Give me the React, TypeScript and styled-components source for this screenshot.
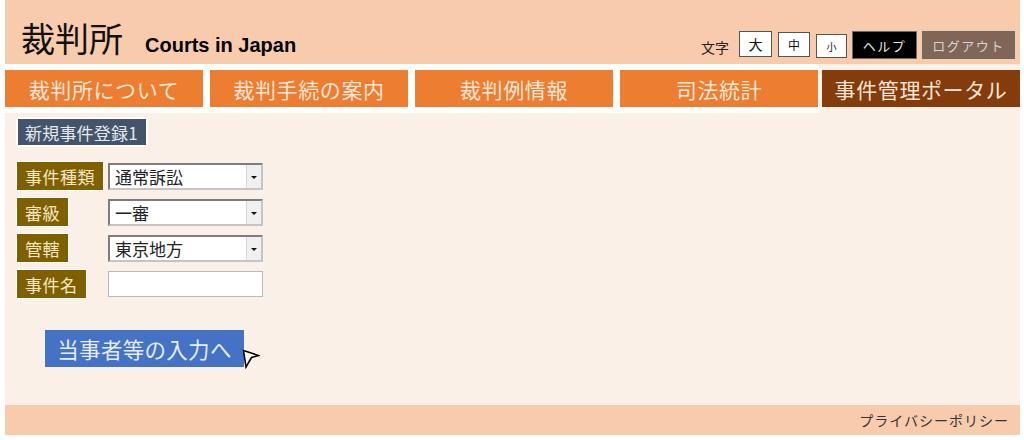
import React from "react";
import styled, { createGlobalStyle } from "styled-components";

const Global = createGlobalStyle`
  html, body { margin: 0; padding: 0; background: #ffffff; }
  body { font-family: "Noto Sans CJK JP", "Noto Sans", sans-serif; }
  * { box-sizing: border-box; }
`;

const JP = `"Noto Sans CJK JP", "Noto Sans", sans-serif`;

const Page = styled.div`
  width: 1015px;
  margin-left: 5px;
  display: flex;
  flex-direction: column;
`;

const Header = styled.header`
  height: 64px;
  background: #f8cbad;
  display: flex;
  justify-content: space-between;
  align-items: flex-end;
  padding: 0 5px 3px 16px;
`;

const TitleGroup = styled.div`
  display: flex;
  align-items: baseline;
  gap: 22px;
  margin-bottom: 3px;
`;

const SiteName = styled.span`
  font-family: ${JP};
  font-size: 34px;
  line-height: 40px;
  color: #111;
  font-weight: 400;
`;

const SiteEn = styled.span`
  font-family: "Liberation Sans", Arial, sans-serif;
  font-weight: 700;
  font-size: 20px;
  color: #000;
`;

const Tools = styled.div`
  display: flex;
  align-items: center;
  margin-bottom: 2px;
`;

const ToolLabel = styled.span`
  font-family: ${JP};
  font-size: 14px;
  color: #222;
  margin-right: 10px;
  margin-top: 4px;
`;

const SizeBtn = styled.span<{ $fs: number; $w: number; $h: number; $dy: number; $gap: number }>`
  display: flex;
  align-items: center;
  justify-content: center;
  width: ${(p) => p.$w}px;
  height: ${(p) => p.$h}px;
  margin-right: ${(p) => p.$gap}px;
  margin-top: ${(p) => p.$dy}px;
  background: #fff;
  border: 1.5px solid #555;
  font-family: ${JP};
  font-size: ${(p) => p.$fs}px;
  color: #111;
`;

const DarkBtn = styled.span<{ $bg: string; $fg: string; $w: number }>`
  display: flex;
  align-items: center;
  justify-content: center;
  width: ${(p) => p.$w}px;
  height: 28px;
  margin-left: 5px;
  background: ${(p) => p.$bg};
  border: 1px solid #6b6b6b;
  color: ${(p) => p.$fg};
  font-family: ${JP};
  font-size: 13px;
  letter-spacing: 1.5px;
`;

const Main = styled.main`
  height: 341px;
  background: #fbf0e7;
  display: flex;
  flex-direction: column;
`;

const NavRow = styled.div`
  display: flex;
  align-items: flex-start;
`;

const NavBox = styled.nav`
  width: 814px;
  background: #ffffff;
  padding: 6px 1px 6px 0;
  display: flex;
  gap: 7px;
`;

const Tab = styled.div<{ $active?: boolean }>`
  width: 198px;
  height: 37px;
  display: flex;
  align-items: center;
  justify-content: center;
  background: ${(p) => (p.$active ? "#843c0c" : "#ed7d31")};
  color: #fbe5d6;
  font-family: ${JP};
  font-size: 21px;
  white-space: nowrap;
  letter-spacing: 0.6px;
`;

const ActiveTab = styled(Tab)`
  margin-top: 6px;
  margin-left: 3px;
`;

const Content = styled.section`
  padding: 4px 0 0 11px;
  display: flex;
  flex-direction: column;
`;

const PageTag = styled.div`
  align-self: flex-start;
  height: 30px;
  padding: 0 8px 0 7px;
  display: flex;
  align-items: center;
  background: #44546a;
  border: 2px solid #ffffff;
  color: #e4e8ef;
  font-family: ${JP};
  font-size: 17px;
  letter-spacing: 0.2px;
`;

const Form = styled.div`
  margin-top: 14px;
  display: grid;
  grid-template-columns: 92px 155px;
  row-gap: 6px;
  align-items: center;
`;

const FieldLabel = styled.div`
  justify-self: start;
  height: 30px;
  padding: 0 8px;
  display: flex;
  align-items: center;
  background: #7f6000;
  border: 1px solid #ffffff;
  color: #f4e6c4;
  font-family: ${JP};
  font-size: 17px;
  letter-spacing: 0.5px;
`;

const SelectBox = styled.div`
  height: 27px;
  display: flex;
  align-items: stretch;
  background: #ffffff;
  border: 2px solid;
  border-color: #7d7d7d #c4c4c4 #c4c4c4 #7d7d7d;
`;

const SelectText = styled.span`
  flex: 1;
  display: flex;
  align-items: center;
  padding-left: 5px;
  font-family: ${JP};
  font-size: 17px;
  color: #222;
`;

const SelectArrow = styled.span`
  width: 15px;
  background: #f0f0f0;
  border-left: 1px solid #d8d8d8;
  display: flex;
  align-items: center;
  justify-content: center;
  &::after {
    content: "";
    display: block;
    margin-top: 3px;
    border-left: 3px solid transparent;
    border-right: 3px solid transparent;
    border-top: 3px solid #111;
  }
`;

const TextBox = styled.div`
  height: 26px;
  background: #ffffff;
  border: 1px solid #b9b9b9;
`;

const ActionRow = styled.div`
  margin-top: 31px;
  margin-left: 29px;
  display: flex;
  align-items: flex-start;
`;

const NextButton = styled.div`
  width: 199px;
  height: 37px;
  display: flex;
  align-items: center;
  justify-content: center;
  background: #4472c4;
  color: #e6ecf8;
  font-family: ${JP};
  font-size: 21.5px;
  letter-spacing: 0.3px;
`;

const Cursor = styled.svg`
  margin-top: 19px;
  margin-left: -2px;
`;

const Footer = styled.footer`
  height: 30px;
  background: #f8cbad;
  display: flex;
  align-items: center;
  justify-content: flex-end;
  padding-right: 11px;
  font-family: ${JP};
  font-size: 14px;
  color: #333;
  letter-spacing: 1px;
`;

const navItems = ["裁判所について", "裁判手続の案内", "裁判例情報", "司法統計"];

const selects = [
  { label: "事件種類", value: "通常訴訟" },
  { label: "審級", value: "一審" },
  { label: "管轄", value: "東京地方" },
];

export default function App() {
  return (
    <>
      <Global />
      <Page>
        <Header>
          <TitleGroup>
            <SiteName>裁判所</SiteName>
            <SiteEn>Courts in Japan</SiteEn>
          </TitleGroup>
          <Tools>
            <ToolLabel>文字</ToolLabel>
            <SizeBtn $fs={14} $w={33} $h={26} $dy={-2} $gap={6}>大</SizeBtn>
            <SizeBtn $fs={12} $w={32} $h={25} $dy={-2} $gap={6}>中</SizeBtn>
            <SizeBtn $fs={10} $w={31} $h={24} $dy={2} $gap={0}>小</SizeBtn>
            <DarkBtn $bg="#000000" $fg="#e8e8e8" $w={65}>ヘルプ</DarkBtn>
            <DarkBtn $bg="#7f6656" $fg="#d9d4d0" $w={93}>ログアウト</DarkBtn>
          </Tools>
        </Header>
        <Main>
          <NavRow>
            <NavBox>
              {navItems.map((t) => (
                <Tab key={t}>{t}</Tab>
              ))}
            </NavBox>
            <ActiveTab $active>事件管理ポータル</ActiveTab>
          </NavRow>
          <Content>
            <PageTag>新規事件登録1</PageTag>
            <Form>
              {selects.map((s) => (
                <React.Fragment key={s.label}>
                  <FieldLabel>{s.label}</FieldLabel>
                  <SelectBox>
                    <SelectText>{s.value}</SelectText>
                    <SelectArrow />
                  </SelectBox>
                </React.Fragment>
              ))}
              <FieldLabel>事件名</FieldLabel>
              <TextBox />
            </Form>
            <ActionRow>
              <NextButton>当事者等の入力へ</NextButton>
              <Cursor width="18" height="20" viewBox="0 0 18 20">
                <path
                  d="M1.5 1.5 L16.5 6.5 L9.5 8.5 L4 18 Z"
                  fill="#ffffff"
                  stroke="#000000"
                  strokeWidth="1.6"
                  strokeLinejoin="miter"
                />
              </Cursor>
            </ActionRow>
          </Content>
        </Main>
        <Footer>プライバシーポリシー</Footer>
      </Page>
    </>
  );
}
